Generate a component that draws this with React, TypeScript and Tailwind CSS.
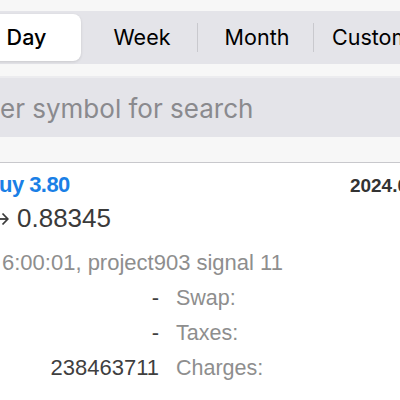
import React from "react";

const sf = { fontFamily: "Inter, 'Liberation Sans', sans-serif" };
const hv = { fontFamily: "'Liberation Sans', Arial, sans-serif" };

export default function App() {
  return (
    <div className="w-[400px] h-[400px] overflow-hidden bg-white relative">
      <div className="bg-[#f7f7f7] pt-[11px] pb-[12px]">
        <div className="ml-[-34px] w-[470px] h-[53px] bg-[#e4e4e9] rounded-[10px] p-[3px] flex items-stretch" style={sf}>
          <div className="w-[112px] bg-white rounded-[8px] shadow-[0_1px_3px_rgba(0,0,0,0.12)] flex items-center justify-center text-[21.5px] text-black font-medium">
            <span className="ml-[3px]">Day</span>
          </div>
          <div className="w-[116px] flex items-center justify-center pl-[6px] text-[21.5px] text-black">Week</div>
          <div className="w-px bg-[#c9c9ce] my-[9px]" />
          <div className="w-[115px] flex items-center justify-center pl-[3px] text-[21.5px] text-black">Month</div>
          <div className="w-px bg-[#c9c9ce] my-[9px]" />
          <div className="flex-1 flex items-center pl-[18px] text-[21.5px] text-black">Custom</div>
        </div>
      </div>
      <div className="h-[2px] bg-[#ececef]" />
      <div className="h-[59px] bg-[#e4e4e9] flex items-center pt-[2px] text-[26px] text-[#8a8a8e]" style={sf}>
        er symbol for search
      </div>
      <div className="h-[26px] bg-[#f7f7f7] border-b border-[#c8c8cc]" />
      <div className="bg-white" style={hv}>
        <div className="flex justify-between items-start pt-[7px]">
          <div className="text-[22px] font-bold tracking-tight text-[#1a7fe6] leading-[30px] -ml-[1px]">uy 3.80</div>
          <div className="text-[19px] font-bold text-[#333] leading-[30px] mr-[-8px] mt-[1px]">2024.0</div>
        </div>
        <div className="text-[26px] text-[#3a3a3a] leading-[32px] mt-[1px] flex items-center">
          <svg width="9" height="14" viewBox="0 0 9 14" className="mt-[2px]" aria-hidden="true">
            <path d="M0 7H7.5" stroke="#3a3a3a" strokeWidth="1.8" fill="none" />
            <path d="M2.5 1.5L7.8 7L2.5 12.5" stroke="#3a3a3a" strokeWidth="1.8" fill="none" strokeLinejoin="miter" />
          </svg>
          <span className="ml-[8px]">0.88345</span>
        </div>
        <div className="text-[22px] text-[#8e8e8e] leading-[26px] mt-[16px] ml-[2px]">6:00:01, project903 signal 11</div>
        <div className="mt-[10px] flex flex-col gap-[11px] text-[22px] leading-[24px]">
          {[
            ["-", "Swap:"],
            ["-", "Taxes:"],
            ["238463711", "Charges:"],
          ].map(([v, l]) => (
            <div key={l} className="flex">
              <div className="w-[159px] text-right text-[#3f3f3f]">{v}</div>
              <div className="ml-[17px] text-[#8e8e8e] text-[21.5px]">{l}</div>
            </div>
          ))}
        </div>
      </div>
    </div>
  );
}
